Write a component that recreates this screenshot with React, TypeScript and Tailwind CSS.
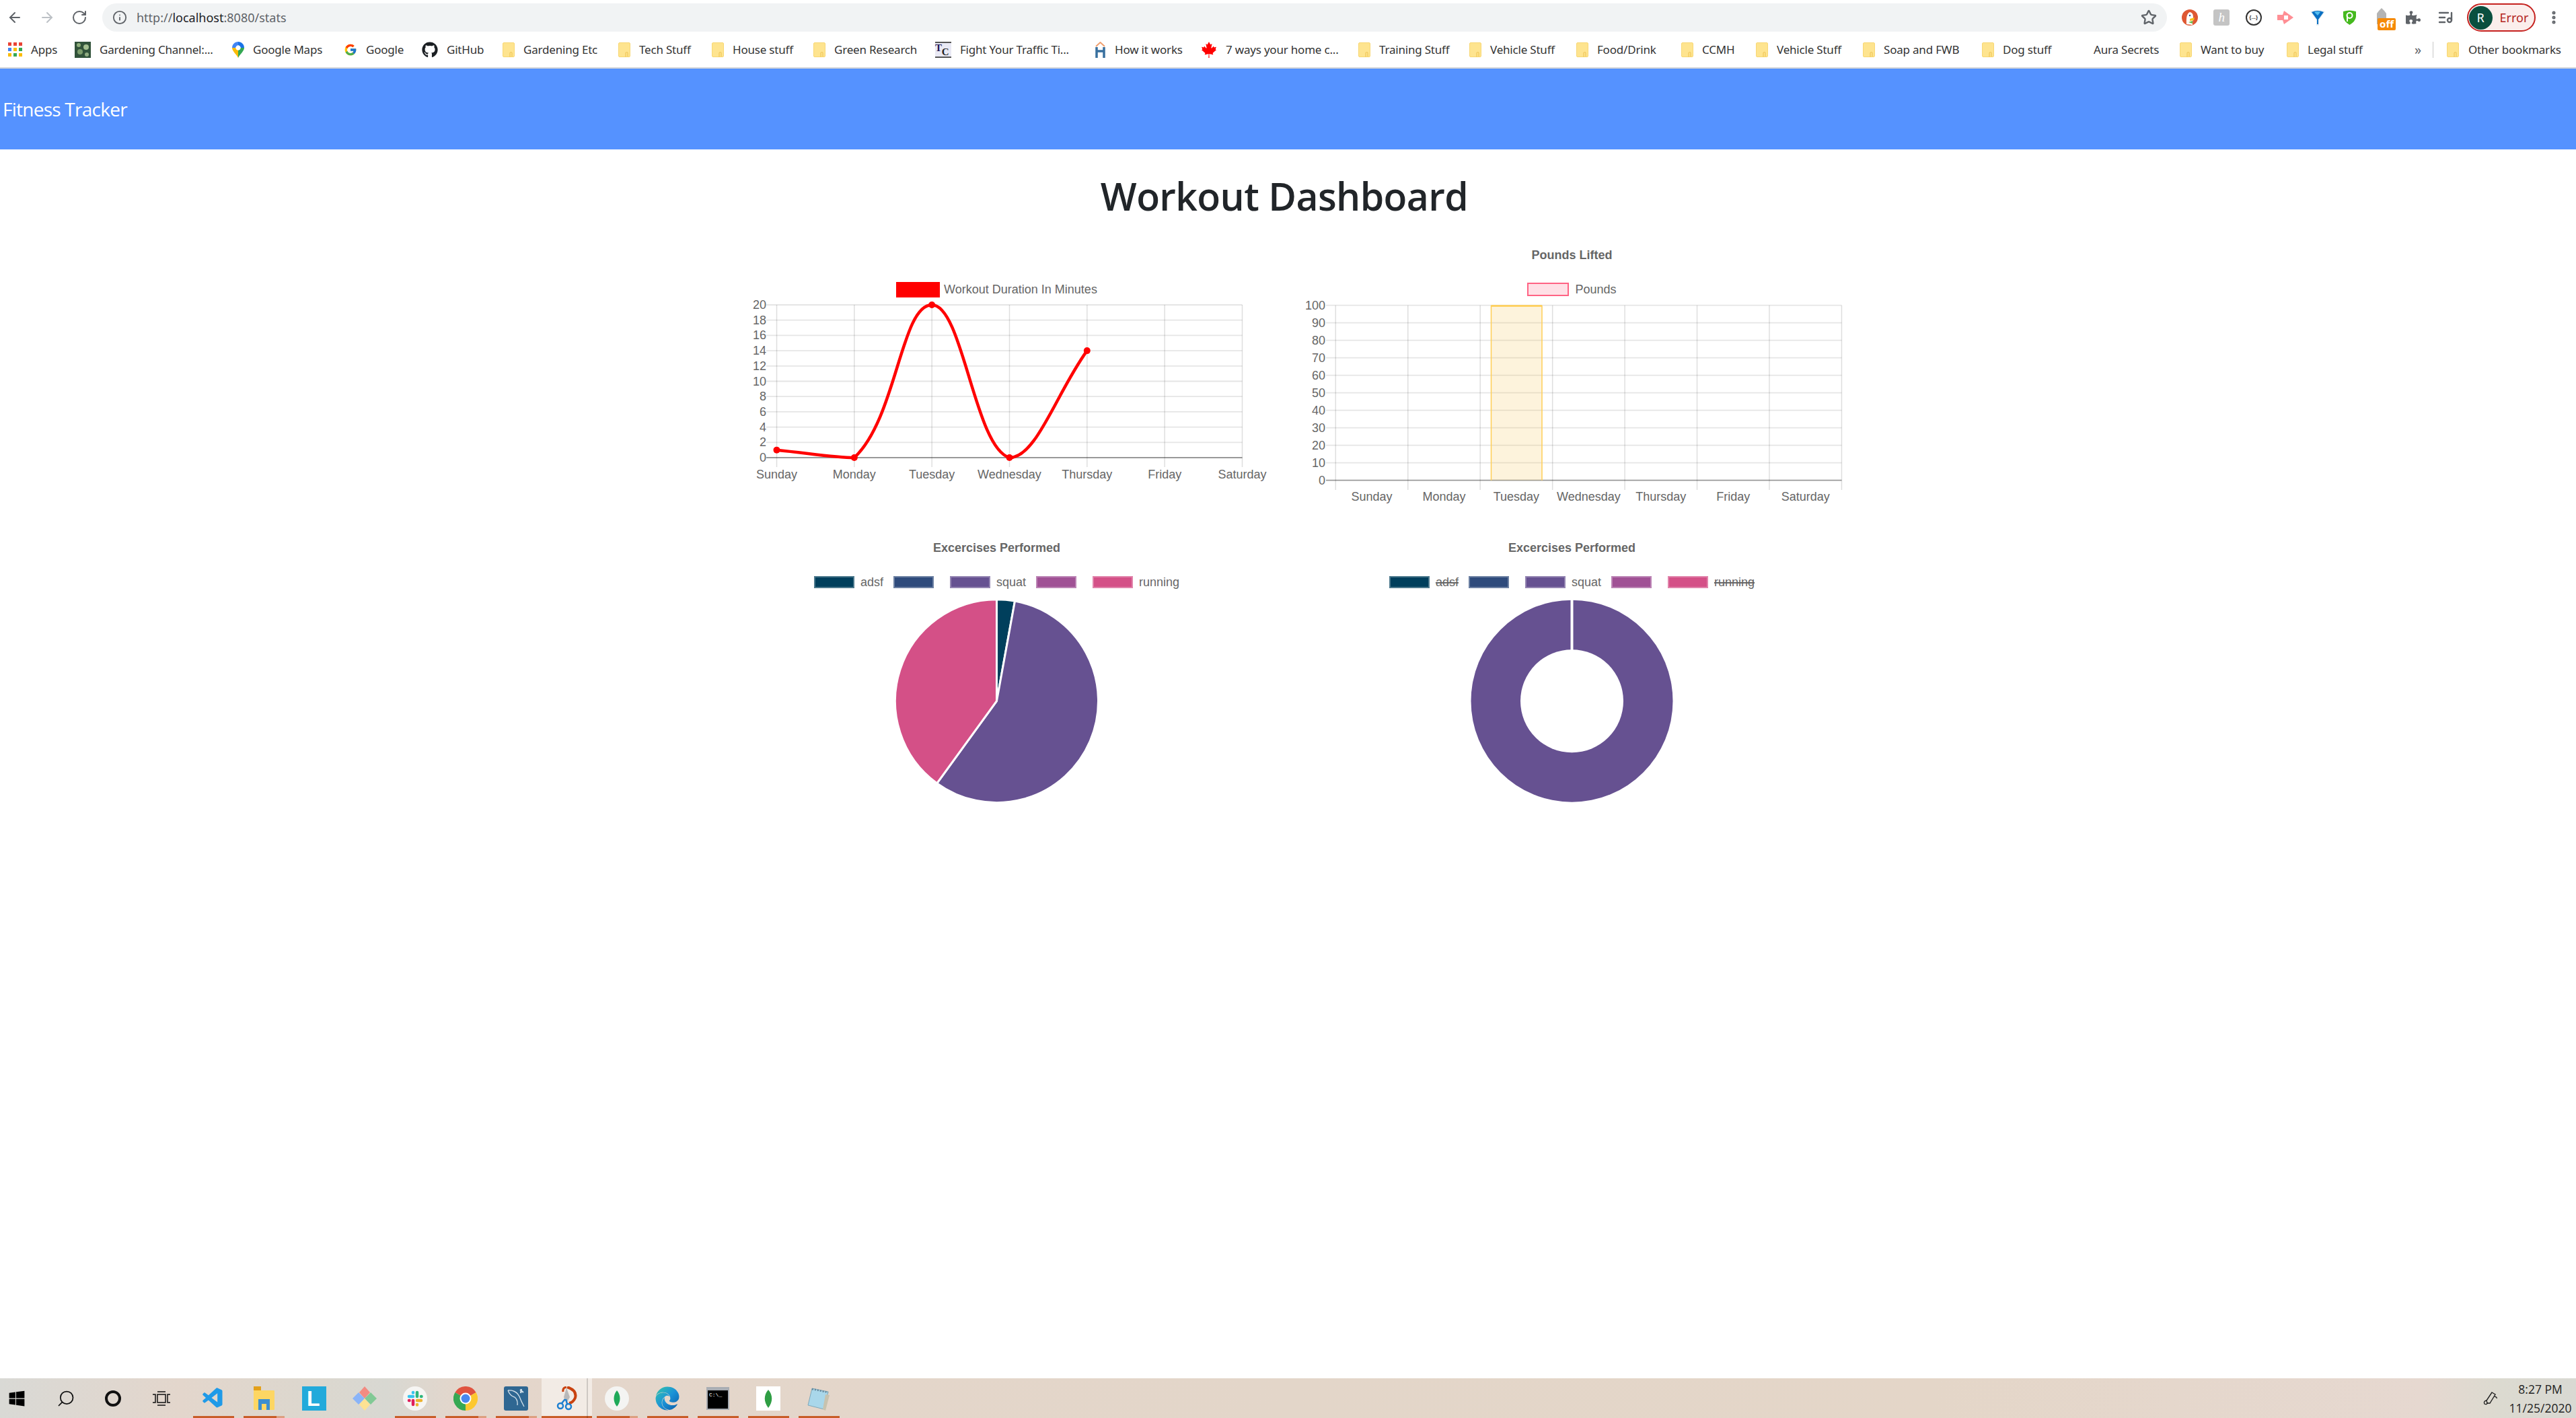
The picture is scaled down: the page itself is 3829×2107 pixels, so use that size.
import { ArrowLeft, ArrowRight, EllipsisVertical, Info, ListMusic, RotateCw, Search, Star } from "lucide-react"
import { FaCanadianMapleLeaf, FaEdge, FaGithub, FaPuzzlePiece, FaWindows } from "react-icons/fa"
import { FcGoogle } from "react-icons/fc"
import { VscVscode } from "react-icons/vsc"

const days = ["Sunday", "Monday", "Tuesday", "Wednesday", "Thursday", "Friday", "Saturday"]

const Folder = () => (
  <svg width="18" height="22" viewBox="0 0 18 22" className="shrink-0">
    <rect x="0.5" y="0.5" width="17" height="21" rx="1.5" fill="#fee48f" stroke="#f8d774" />
    <path d="M11 21.5 V16 q0 -1.5 1.5 -1.5 h0.5 q1 0 1 1.5 V21" fill="none" stroke="#eec24f" />
  </svg>
)

const AppsIcon = () => {
  const colors = ["#ea4335", "#ea4335", "#ea4335", "#4285f4", "#fbbc05", "#34a853", "#fbbc05", "#34a853", "#fbbc05"]
  return (
    <div className="grid grid-cols-3 gap-[3px] w-[21px] shrink-0">
      {colors.map((c, i) => (
        <svg key={i} width="5" height="5"><rect width="5" height="5" fill={c} /></svg>
      ))}
    </div>
  )
}

const ThumbIcon = () => (
  <svg width="24" height="24" viewBox="0 0 24 24" className="shrink-0">
    <rect width="24" height="24" fill="#31523a" />
    <circle cx="6" cy="5" r="3" fill="#8fae7c" />
    <circle cx="17" cy="8" r="4" fill="#a3bf90" />
    <circle cx="8" cy="15" r="4" fill="#7c9d6c" />
    <circle cx="18" cy="19" r="3" fill="#91ad82" />
  </svg>
)

const MapsIcon = () => (
  <svg width="18" height="24" viewBox="0 0 18 24" className="shrink-0">
    <path d="M9 0 C4 0 0 4 0 9 L5 9 L9 5 Z" fill="#4285f4" />
    <path d="M9 0 C14 0 18 4 18 9 L13 9 L9 5 Z" fill="#1a73e8" />
    <path d="M0 9 C0 14 6 18 9 24 L9 13 L5 9 Z" fill="#fbbc05" />
    <path d="M18 9 C18 14 12 18 9 24 L9 13 L13 9 Z" fill="#34a853" />
    <circle cx="9" cy="9" r="3.5" fill="#fff" />
  </svg>
)

const TcIcon = () => (
  <div className="w-[24px] h-[24px] shrink-0 bg-[#e9e9f4] border-y-2 border-[#555] flex text-[#1f1a55] font-bold text-[15px] leading-none font-['Liberation_Serif',serif]">
    <span>T</span>
    <span className="mt-[6px] text-[#222]">C</span>
  </div>
)

const HouseIcon = () => (
  <svg width="17" height="24" viewBox="0 0 17 24" className="shrink-0">
    <path d="M2 7 L8.5 1 L15 7" fill="none" stroke="#f0a070" strokeWidth="2" />
    <path d="M3 8 V24 M14 8 V24 M3 14 H14" fill="none" stroke="#38709f" strokeWidth="3.5" />
  </svg>
)

const bookmarks = [
  { label: "Apps", w: "w-[99px]", icon: <AppsIcon /> },
  { label: "Gardening Channel:...", w: "w-[234px]", icon: <ThumbIcon /> },
  { label: "Google Maps", w: "w-[166px]", icon: <MapsIcon /> },
  { label: "Google", w: "w-[116px]", icon: <FcGoogle className="w-[20px] h-[20px] shrink-0" /> },
  { label: "GitHub", w: "w-[120px]", icon: <FaGithub className="w-[24px] h-[24px] shrink-0 text-[#1b1f23]" /> },
  { label: "Gardening Etc", w: "w-[172px]", icon: <Folder /> },
  { label: "Tech Stuff", w: "w-[139px]", icon: <Folder /> },
  { label: "House stuff", w: "w-[151px]", icon: <Folder /> },
  { label: "Green Research", w: "w-[181px]", icon: <Folder /> },
  { label: "Fight Your Traffic Ti...", w: "w-[237px]", icon: <TcIcon /> },
  { label: "How it works", w: "w-[158px]", icon: <HouseIcon /> },
  { label: "7 ways your home c...", w: "w-[234px]", icon: <FaCanadianMapleLeaf className="w-[24px] h-[24px] shrink-0 text-[#f00]" /> },
  { label: "Training Stuff", w: "w-[165px]", icon: <Folder /> },
  { label: "Vehicle Stuff", w: "w-[159px]", icon: <Folder /> },
  { label: "Food/Drink", w: "w-[156px]", icon: <Folder /> },
  { label: "CCMH", w: "w-[111px]", icon: <Folder /> },
  { label: "Vehicle Stuff", w: "w-[159px]", icon: <Folder /> },
  { label: "Soap and FWB", w: "w-[177px]", icon: <Folder /> },
  { label: "Dog stuff", w: "w-[135px]", icon: <Folder /> },
  { label: "Aura Secrets", w: "w-[159px]", icon: <div className="w-[18px] shrink-0" /> },
  { label: "Want to buy", w: "w-[159px]", icon: <Folder /> },
  { label: "Legal stuff", w: "w-[190px]", icon: <Folder /> },
]

const Extensions = () => (
  <div className="flex items-center ml-[10px]">
    <div className="w-[47.5px] flex justify-center">
      <svg width="24" height="24" viewBox="0 0 24 24">
        <circle cx="12" cy="12" r="12" fill="#de5833" />
        <path d="M7 22 Q6 6 12 4 Q17 5 17 11 Q16 18 16 23 Z" fill="#fff" />
        <path d="M12 14 L19 12 L18 16 L12 17 Z" fill="#f5c21b" />
        <path d="M10 19 L16 17 V21 Z" fill="#65bc46" />
        <circle cx="12" cy="9" r="1.2" fill="#2d4f8e" />
      </svg>
    </div>
    <div className="w-[47.5px] flex justify-center">
      <div className="w-[24px] h-[24px] rounded-[3px] bg-[#c4c4c4] text-white italic text-[19px] leading-[23px] text-center font-['Liberation_Serif',serif]">h</div>
    </div>
    <div className="w-[47.5px] flex justify-center">
      <div className="w-[24px] h-[24px] rounded-full border-2 border-[#333] text-[#333] text-[8px] leading-[20px] text-center font-bold font-['Liberation_Sans',sans-serif]">{"{...}"}</div>
    </div>
    <div className="w-[47.5px] flex justify-center">
      <svg width="24" height="20" viewBox="0 0 24 20">
        <path d="M0 6 H8 L10 0 L24 10 L10 20 L8 14 H0 Z" fill="#ff8f95" />
        <rect x="10" y="7" width="6" height="6" fill="#fff" />
      </svg>
    </div>
    <div className="w-[47.5px] flex justify-center">
      <svg width="22" height="24" viewBox="0 0 22 24">
        <path d="M0 3 Q11 -1 22 3 L13 16 V24 H9 V16 Z" fill="#e8eef2" />
        <path d="M2 4 Q11 0 20 4 L12 15 V22 H10 V15 Z" fill="#0a6fc2" />
        <path d="M6 4 Q11 2 15 4 L11 9 Z" fill="#52bdf0" />
      </svg>
    </div>
    <div className="w-[47.5px] flex justify-center">
      <svg width="19" height="22" viewBox="0 0 19 22">
        <path d="M0 2 Q9 -1 19 2 V10 Q18 17 9.5 22 Q1 17 0 10 Z" fill="#45b91e" />
        <circle cx="9.5" cy="8" r="4" fill="none" stroke="#fff" strokeWidth="2" />
        <path d="M6 8 V17" stroke="#fff" strokeWidth="2" />
      </svg>
    </div>
    <div className="w-[47.5px] flex justify-center relative">
      <svg width="18" height="24" viewBox="0 0 18 24" className="-mt-[4px]">
        <path d="M2 24 V8 L5 4 L9 0 L13 4 L16 8 V24 Z" fill="#b4b4b4" />
      </svg>
      <span className="absolute left-[18px] top-[11px] w-[27px] h-[18px] rounded-[2px] bg-[#f58a07] text-white text-[15px] leading-[17px] font-bold text-center font-['Noto_Sans',sans-serif]">off</span>
    </div>
    <div className="w-[47.5px] flex justify-center">
      <FaPuzzlePiece className="w-[22px] h-[22px] text-[#5f6368]" />
    </div>
    <div className="w-[47.5px] flex justify-center">
      <ListMusic className="w-[24px] h-[24px] text-[#5f6368]" strokeWidth={2.4} />
    </div>
  </div>
)

const Toolbar = () => (
  <div className="h-[47px] pt-[5px] flex bg-white">
    <div className="flex items-center ml-[10px] gap-[24px]">
      <ArrowLeft className="w-[24px] h-[24px] text-[#5f6368]" />
      <ArrowRight className="w-[24px] h-[24px] text-[#bdc1c6]" />
      <RotateCw className="w-[24px] h-[24px] text-[#5f6368]" />
    </div>
    <div className="ml-[22px] w-[3069px] h-[42px] rounded-full bg-[#f1f3f4] flex items-center pl-[15px] pr-[15px]">
      <Info className="w-[22px] h-[22px] text-[#5f6368]" />
      <span className="ml-[14px] text-[18px] text-[#5f6368]">
        http://<span className="text-[#202124]">localhost</span>:8080/stats
      </span>
      <Star className="ml-auto w-[24px] h-[24px] text-[#5f6368]" strokeWidth={2.4} />
    </div>
    <Extensions />
    <div className="ml-[8px] w-[102px] h-[42px] rounded-full border-2 border-[#c5221f] bg-[#fbeeec] flex items-center pl-[1px]">
      <span className="w-[35px] h-[35px] rounded-full bg-[#0a4f3f] text-white text-[18px] flex items-center justify-center">R</span>
      <span className="ml-[11px] text-[18px] text-[#b3261e]">Error</span>
    </div>
    <div className="ml-[15px] h-[42px] flex items-center">
      <EllipsisVertical className="w-[24px] h-[24px] text-[#5f6368]" strokeWidth={3} />
    </div>
  </div>
)

const BookmarkBar = () => (
  <div className="h-[55px] flex items-center pl-[12px] bg-white border-b-2 border-[#d0d3d8] text-[17px] tracking-[-0.2px] text-[#333]">
    {bookmarks.map((b, i) => (
      <div key={i} className={`${b.w} shrink-0 flex items-center gap-[13px] whitespace-nowrap`}>
        {b.icon}
        <span>{b.label}</span>
      </div>
    ))}
    <span className="w-[27px] shrink-0 text-[20px] leading-none text-[#5f6368]">»</span>
    <div className="w-[1px] h-[24px] bg-[#c8c8c8] mr-[20px] shrink-0" />
    <div className="flex items-center gap-[14px] whitespace-nowrap">
      <Folder />
      <span>Other bookmarks</span>
    </div>
  </div>
)

type Pt = { x: number; y: number }

// same control points chart.js makes for tension 0.4
const splinePath = (pts: Pt[], top: number, bottom: number) => {
  const t = 0.4
  const clamp = (v: number) => Math.min(bottom, Math.max(top, v))
  const ctrl = pts.map((p, i) => {
    const a = pts[i - 1] || p
    const b = pts[i + 1] || p
    const d1 = Math.hypot(p.x - a.x, p.y - a.y)
    const d2 = Math.hypot(b.x - p.x, b.y - p.y)
    const fa = (t * d1) / (d1 + d2)
    const fb = (t * d2) / (d1 + d2)
    return {
      px: p.x - fa * (b.x - a.x),
      py: clamp(p.y - fa * (b.y - a.y)),
      nx: p.x + fb * (b.x - a.x),
      ny: clamp(p.y + fb * (b.y - a.y)),
    }
  })
  let d = `M${pts[0].x} ${pts[0].y}`
  for (let i = 1; i < pts.length; i++) {
    d += ` C${ctrl[i - 1].nx} ${ctrl[i - 1].ny} ${ctrl[i].px} ${ctrl[i].py} ${pts[i].x} ${pts[i].y}`
  }
  return d
}

const Title = ({ text }: { text?: string }) => (
  <div className="h-[38px] leading-[38px] text-center text-[18px] font-bold text-[#666]">{text}</div>
)

const LineChart = () => {
  const left = 1154.5
  const step = 115.33
  const top = 453
  const zero = 680
  const values = [1, 0, 20, 0, 14]
  const pts = values.map((v, i) => ({ x: left + i * step, y: zero - (v / 20) * (zero - top) }))
  return (
    <div>
      <Title />
      <div className="mt-[20px] h-[24px] flex items-center justify-center gap-[6px] text-[18px] text-[#666]">
        <div className="w-[65px] h-[23px] bg-[#f00]" />
        <span>Workout Duration In Minutes</span>
      </div>
      <svg width="855" height="310" viewBox="1054 442 855 310" className="block">
        {days.map((d, i) => {
          const x = left + i * step
          return (
            <g key={d}>
              <line x1={x} x2={x} y1={top} y2={694} stroke="#000" strokeOpacity="0.13" strokeWidth="1.5" />
              <text x={x} y={705} textAnchor="middle" dominantBaseline="central" fill="#666" fontSize="18">{d}</text>
            </g>
          )
        })}
        {Array.from({ length: 11 }, (_, i) => {
          const y = top + (i * (zero - top)) / 10
          return (
            <g key={i}>
              <line x1={1139} x2={left + 6 * step} y1={y} y2={y} stroke="#000" strokeOpacity={i === 10 ? 0.4 : 0.1} strokeWidth="1.8" />
              <text x={1139} y={y} textAnchor="end" dominantBaseline="central" fill="#666" fontSize="18">{20 - i * 2}</text>
            </g>
          )
        })}
        <path d={splinePath(pts, top, zero)} fill="none" stroke="#f00" strokeWidth="4.5" />
        {pts.map((p, i) => (
          <circle key={i} cx={p.x} cy={p.y} r="5" fill="#f00" />
        ))}
      </svg>
    </div>
  )
}

const BarChart = () => {
  const left = 1985.3
  const step = 107.45
  const top = 453.7
  const zero = 713.7
  return (
    <div>
      <Title text="Pounds Lifted" />
      <div className="mt-[20px] h-[24px] flex items-center justify-center gap-[9px] text-[18px] text-[#666]">
        <div className="w-[62px] h-[20px] bg-[#ffe0e6] border-2 border-[#ff6384]" />
        <span>Pounds</span>
      </div>
      <svg width="855" height="310" viewBox="1909 442 855 310" className="block">
        {days.map((d, i) => (
          <text key={d} x={left + (i + 0.5) * step} y={737.7} textAnchor="middle" dominantBaseline="central" fill="#666" fontSize="18">{d}</text>
        ))}
        {Array.from({ length: 8 }, (_, i) => {
          const x = left + i * step
          return <line key={i} x1={x} x2={x} y1={top} y2={728} stroke="#000" strokeOpacity="0.13" strokeWidth="1.5" />
        })}
        {Array.from({ length: 11 }, (_, i) => {
          const y = top + i * 26
          return (
            <g key={i}>
              <line x1={1971} x2={left + 7 * step} y1={y} y2={y} stroke="#000" strokeOpacity={i === 10 ? 0.4 : 0.1} strokeWidth="1.8" />
              <text x={1970} y={y} textAnchor="end" dominantBaseline="central" fill="#666" fontSize="18">{100 - i * 10}</text>
            </g>
          )
        })}
        <path d="M2216.5 713.7 V454.5 H2292 V713.7" fill="#f8c860" fillOpacity="0.22" stroke="#ffce56" strokeWidth="1.5" />
        <line x1="2216.5" x2="2292" y1="454.5" y2="454.5" stroke="#ffce56" strokeWidth="2.5" />
      </svg>
    </div>
  )
}

const legend = [
  { label: "adsf", color: "bg-[#003f5c]" },
  { label: "", color: "bg-[#2f4b7c]" },
  { label: "squat", color: "bg-[#665191]" },
  { label: "", color: "bg-[#a05195]" },
  { label: "running", color: "bg-[#d45087]" },
]

const Legend = ({ struck = [] as string[] }) => (
  <div className="mt-[20px] h-[24px] flex items-center justify-center gap-[15px] text-[18px] text-[#666]">
    {legend.map((l, i) => (
      <div key={i} className="flex items-center gap-[9px]">
        <div className={`w-[60px] h-[18px] border-2 border-white/30 ${l.color}`} />
        <span className={struck.includes(l.label) ? "line-through decoration-2" : ""}>{l.label}</span>
      </div>
    ))}
  </div>
)

const slice = (cx: number, cy: number, r: number, from: number, to: number) => {
  const pt = (deg: number) => {
    const a = (deg * Math.PI) / 180
    return `${cx + r * Math.sin(a)} ${cy - r * Math.cos(a)}`
  }
  return `M${cx} ${cy} L${pt(from)} A${r} ${r} 0 ${to - from > 180 ? 1 : 0} 1 ${pt(to)} Z`
}

const PieChart = () => (
  <div>
    <Title text="Excercises Performed" />
    <Legend />
    <svg width="855" height="330" viewBox="0 0 855 330" className="block">
      <path d={slice(427.5, 164.7, 151, 0, 10.3)} fill="#003f5c" stroke="#fff" strokeWidth="3" />
      <path d={slice(427.5, 164.7, 151, 10.3, 216)} fill="#665191" stroke="#fff" strokeWidth="3" />
      <path d={slice(427.5, 164.7, 151, 216, 360)} fill="#d45087" stroke="#fff" strokeWidth="3" />
    </svg>
  </div>
)

const DoughnutChart = () => (
  <div>
    <Title text="Excercises Performed" />
    <Legend struck={["adsf", "running"]} />
    <svg width="855" height="330" viewBox="0 0 855 330" className="block">
      <circle cx="427.5" cy="164.7" r="150" fill="#665191" />
      <circle cx="427.5" cy="164.7" r="76.5" fill="#fff" />
      <line x1="427.5" x2="427.5" y1="12" y2="90" stroke="#fff" strokeWidth="4" />
    </svg>
  </div>
)

const Underline = ({ kind }: { kind?: string }) => {
  if (!kind) return null
  return (
    <div className="absolute bottom-0 left-[7px] w-[61px] h-[3px] flex">
      <div className={`h-full bg-[#c85d28] ${kind === "full" ? "w-full" : "w-[49px]"}`} />
      {kind === "part" && <div className="h-full w-[12px] bg-[#dd9f80]" />}
    </div>
  )
}

const ChromeIcon = () => (
  <svg width="36" height="36" viewBox="0 0 36 36">
    <path d="M18 18 L33.6 9 A18 18 0 0 0 2.4 9 Z" fill="#e0533f" />
    <path d="M18 18 L33.6 9 A18 18 0 0 1 18 36 Z" fill="#fdc82f" />
    <path d="M18 18 L18 36 A18 18 0 0 1 2.4 9 Z" fill="#36a853" />
    <circle cx="18" cy="18" r="8.5" fill="#fff" />
    <circle cx="18" cy="18" r="6.5" fill="#4a88ee" />
  </svg>
)

const taskApps = [
  { run: "full", icon: <VscVscode className="w-[36px] h-[36px] text-[#1f9ae8]" /> },
  {
    run: "part",
    icon: (
      <svg width="36" height="36" viewBox="0 0 36 36">
        <path d="M3 0 H14 V6 H3 Z" fill="#e3a01b" />
        <rect x="3" y="6" width="31" height="29" rx="1" fill="#fdd663" />
        <path d="M10 35 V19 H27 V35 H22 V26 H15 V35 Z" fill="#3a8fd1" />
      </svg>
    ),
  },
  {
    icon: (
      <div className="w-[36px] h-[36px] bg-[#22aadb] pl-[7px] text-white font-bold text-[32px] leading-[36px] font-['Liberation_Sans',sans-serif]">L</div>
    ),
  },
  {
    icon: (
      <svg width="36" height="36" viewBox="0 0 36 36">
        <path d="M18 0 L26 9 L18 18 L10 9 Z" fill="#f28b82" />
        <path d="M9 9 L18 18 L9 27 L0 18 Z" fill="#8ab4f8" />
        <path d="M27 9 L36 18 L27 27 L18 18 Z" fill="#81c995" />
        <path d="M18 18 L26 27 L18 36 L10 27 Z" fill="#fde293" />
      </svg>
    ),
  },
  {
    run: "full",
    icon: (
      <svg width="36" height="36" viewBox="0 0 36 36" strokeLinecap="round" strokeWidth="4.5">
        <circle cx="18" cy="18" r="18" fill="#f6f5f3" />
        <path d="M9 15 H15 M15 9 V9.5" stroke="#36c5f0" fill="none" />
        <path d="M21 9 V15 M27 15 H27.5" stroke="#2eb67d" fill="none" />
        <path d="M21 21 H27 M21 27 V27.5" stroke="#ecb22e" fill="none" />
        <path d="M15 21 V27 M9 21 H9.5" stroke="#e01e5a" fill="none" />
      </svg>
    ),
  },
  { run: "part", icon: <ChromeIcon /> },
  {
    run: "part",
    icon: (
      <svg width="36" height="36" viewBox="0 0 36 36" fill="none" stroke="#d5e3ec" strokeWidth="1.3">
        <rect width="36" height="36" rx="3" fill="#2f6792" stroke="none" />
        <path d="M6 6 Q18 5 23 15 Q26 23 30 30" />
        <path d="M6 6 Q9 14 16 16 Q21 20 20 28" />
        <path d="M24 5 L29 9 M26 4 L25 10" strokeWidth="2.2" />
      </svg>
    ),
  },
  {
    run: "full",
    active: true,
    icon: (
      <svg width="36" height="36" viewBox="0 0 36 36">
        <path d="M19 1 Q34 6 31 17 Q28 24 22 25" fill="none" stroke="#c9420f" strokeWidth="4" />
        <path d="M18 1 Q12 2 13 8" fill="none" stroke="#c9420f" strokeWidth="3" />
        <path d="M18 2 L23 16 L18 25 L14 16 Z" fill="#b9b9b9" />
        <circle cx="9" cy="29" r="4" fill="none" stroke="#1d7fd0" strokeWidth="2.5" />
        <circle cx="21" cy="30" r="4" fill="none" stroke="#1d7fd0" strokeWidth="2.5" />
        <path d="M11 25 L16 19 M19 26 L17 19" stroke="#1d7fd0" strokeWidth="2.5" />
      </svg>
    ),
  },
  {
    run: "part",
    icon: (
      <svg width="36" height="36" viewBox="0 0 36 36">
        <circle cx="18" cy="18" r="18" fill="#f4f4f2" />
        <path d="M18 6 C24 13 24 23 18 30 C12 23 12 13 18 6 Z" fill="#1faa59" />
      </svg>
    ),
  },
  { run: "full", icon: <FaEdge className="w-[36px] h-[36px] fill-[url(#edge-grad)]" /> },
  {
    run: "full",
    icon: (
      <div className="w-[34px] h-[34px] bg-black border-t-[5px] border-x-2 border-b-2 border-[#a9adb3] text-white text-[8px] leading-[14px] pl-[2px] font-['Liberation_Mono',monospace]">C:\_</div>
    ),
  },
  {
    run: "full",
    icon: (
      <svg width="36" height="36" viewBox="0 0 36 36">
        <rect width="36" height="36" fill="#fff" />
        <path d="M18 5 C25 13 25 23 18 32 C11 23 11 13 18 5 Z" fill="#2f9e44" />
      </svg>
    ),
  },
  {
    run: "full",
    icon: (
      <svg width="36" height="36" viewBox="0 0 36 36">
        <path d="M8 3 L32 8 L26 34 L2 28 Z" fill="#a9d7ea" stroke="#7fa7b8" />
        <path d="M28 12 L34 13 L28 36 L24 34 Z" fill="#c8c2ae" />
        <path d="M8 4 L32 9" stroke="#66879a" strokeWidth="2.5" strokeDasharray="2 2" />
      </svg>
    ),
  },
]

const Taskbar = () => (
  <div className="h-[59px] shrink-0 flex items-center text-[#111] bg-[linear-gradient(90deg,#d9d9d5_0%,#e3d6cc_7%,#dcd7ce_12%,#d8d8d2_15%,#e4d6cb_18%,#e3d6c9_50%,#e4d6c8_75%,#e6d8d0_94%,#dcdad0_97%,#d9d9d3_100%)]">
    <svg width="0" height="0" className="absolute">
      <defs>
        <linearGradient id="edge-grad" x1="0" y1="0" x2="1" y2="1">
          <stop offset="0" stopColor="#35c6a8" />
          <stop offset="0.5" stopColor="#1b93d8" />
          <stop offset="1" stopColor="#0a5aa6" />
        </linearGradient>
      </defs>
    </svg>
    <FaWindows className="ml-[12px] w-[26px] h-[26px] text-black" />
    <Search className="ml-[46px] w-[28px] h-[28px] -scale-x-100" strokeWidth={1.5} />
    <div className="ml-[44px] w-[24px] h-[24px] rounded-full border-[4px] border-[#111]" />
    <svg width="26" height="24" viewBox="0 0 26 24" className="ml-[47px]" fill="none" stroke="#111" strokeWidth="1.5">
      <rect x="7" y="6" width="12" height="12" />
      <path d="M0 6 H4 V18 H0 M26 6 H22 V18 H26 M7 2 H19 M7 22 H19" />
    </svg>
    <div className="ml-[26.5px] h-full flex">
      {taskApps.map((a, i) => (
        <div key={i} className={`relative w-[75px] h-full flex items-center justify-center ${a.active ? "bg-white/50" : ""}`}>
          {a.icon}
          {a.active ? <div className="absolute bottom-0 inset-x-0 h-[3px] bg-[#c85d28]" /> : <Underline kind={a.run} />}
          {a.active && <div className="absolute top-0 bottom-0 right-[6px] w-[2px] bg-black/15" />}
        </div>
      ))}
    </div>
    <div className="ml-auto flex items-center">
      <svg width="22" height="22" viewBox="0 0 22 22" fill="none" stroke="#222" strokeWidth="1.4">
        <path d="M13 2 L18 5 L10 18 L6 18 L5 14 Z" />
        <path d="M5 14 Q0 15 2 19 Q5 21 7 17 M17 8 Q21 9 20 11" />
      </svg>
      <div className="w-[106px] ml-[10px] text-center text-[17.5px] leading-[28px] text-[#222] font-['Open_Sans',sans-serif]">
        <div>8:27 PM</div>
        <div>11/25/2020</div>
      </div>
    </div>
  </div>
)

export default function App() {
  return (
    <div className="w-[3829px] h-[2107px] flex flex-col bg-white overflow-hidden font-['Noto_Sans',sans-serif]">
      <Toolbar />
      <BookmarkBar />
      <nav className="h-[120px] shrink-0 bg-[#5592ff] flex items-center pl-[4px] text-white text-[28px] tracking-[-0.75px] font-['Open_Sans',sans-serif]">Fitness Tracker</nav>
      <main className="flex-1 ml-[1054px] w-[1710px]">
        <h1 className="mt-[33px] h-[72px] mb-[33px] text-center text-[57px] leading-[72px] font-semibold tracking-[-0.6px] text-[#212529] font-['Open_Sans',sans-serif]">Workout Dashboard</h1>
        <div className="grid grid-cols-2 gap-y-[43px] font-['Liberation_Sans',sans-serif]">
          <LineChart />
          <BarChart />
          <PieChart />
          <DoughnutChart />
        </div>
      </main>
      <Taskbar />
    </div>
  )
}
